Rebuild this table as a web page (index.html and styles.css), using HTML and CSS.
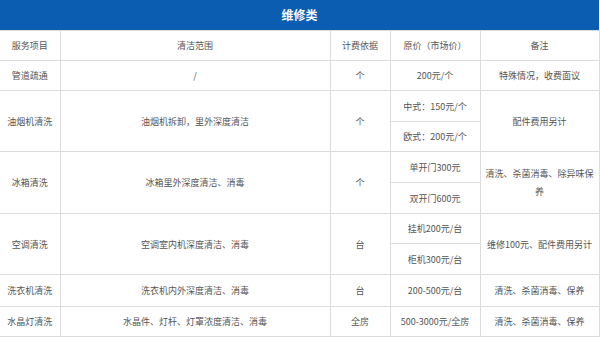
FILE: index.html
```html
<!DOCTYPE html>
<html lang="zh-CN">
<head>
  <meta charset="UTF-8">
  <title>维修类</title>
  <link rel="stylesheet" href="styles.css">
</head>
<body>
  <div class="price-table">
    <div class="table-title">维修类</div>
    <table>
      <colgroup>
        <col class="c-item">
        <col class="c-scope">
        <col class="c-unit">
        <col class="c-price">
        <col class="c-note">
      </colgroup>
      <tr class="h30">
        <td>服务项目</td>
        <td>清洁范围</td>
        <td>计费依据</td>
        <td>原价（市场价）</td>
        <td>备注</td>
      </tr>
      <tr class="h30">
        <td>管道疏通</td>
        <td>/</td>
        <td>个</td>
        <td>200元/个</td>
        <td>特殊情况，收费面议</td>
      </tr>
      <tr class="h31">
        <td rowspan="2">油烟机清洗</td>
        <td rowspan="2">油烟机拆卸，里外深度清洁</td>
        <td rowspan="2">个</td>
        <td>中式：150元/个</td>
        <td rowspan="2">配件费用另计</td>
      </tr>
      <tr class="h30">
        <td>欧式：200元/个</td>
      </tr>
      <tr class="h31">
        <td rowspan="2">冰箱清洗</td>
        <td rowspan="2">冰箱里外深度清洁、消毒</td>
        <td rowspan="2">个</td>
        <td>单开门300元</td>
        <td rowspan="2" class="wrap">清洗、杀菌消毒、除异味保养</td>
      </tr>
      <tr class="h31">
        <td>双开门600元</td>
      </tr>
      <tr class="h30">
        <td rowspan="2">空调清洗</td>
        <td rowspan="2">空调室内机深度清洁、消毒</td>
        <td rowspan="2">台</td>
        <td>挂机200元/台</td>
        <td rowspan="2">维修100元、配件费用另计</td>
      </tr>
      <tr class="h31">
        <td>柜机300元/台</td>
      </tr>
      <tr class="h32">
        <td>洗衣机清洗</td>
        <td>洗衣机内外深度清洁、消毒</td>
        <td>台</td>
        <td>200-500元/台</td>
        <td>清洗、杀菌消毒、保养</td>
      </tr>
      <tr class="h30 last">
        <td>水晶灯清洗</td>
        <td>水晶件、灯杆、灯罩浓度清洁、消毒</td>
        <td>全房</td>
        <td>500-3000元/全房</td>
        <td>清洗、杀菌消毒、保养</td>
      </tr>
    </table>
  </div>
</body>
</html>
```

FILE: styles.css
```css
body {
  margin: 0;
  background: #fff;
  font-family: "Noto Sans CJK SC", "Noto Sans", sans-serif;
}

.price-table {
  width: 599px;
}

.table-title {
  height: 30px;
  line-height: 30px;
  background: #0a5db0;
  color: #fff;
  font-size: 12px;
  font-weight: bold;
  text-align: center;
}

table {
  width: 599px;
  border-collapse: collapse;
  table-layout: fixed;
  border-bottom: 1px solid #41709a;
}

.c-item { width: 60px; }
.c-scope { width: 270px; }
.c-unit { width: 60px; }
.c-price { width: 90px; }
.c-note { width: 119px; }

td {
  border: 1px solid #dcdcdc;
  padding: 0 4px;
  font-size: 9px;
  color: #555;
  text-align: center;
  vertical-align: middle;
  white-space: nowrap;
}

tr td:first-child {
  border-left: none;
}

td.wrap {
  white-space: normal;
  padding: 0 4px;
  line-height: 18px;
}

.h30 { height: 30px; }
.h31 { height: 31px; }
.h32 { height: 32px; }
```
